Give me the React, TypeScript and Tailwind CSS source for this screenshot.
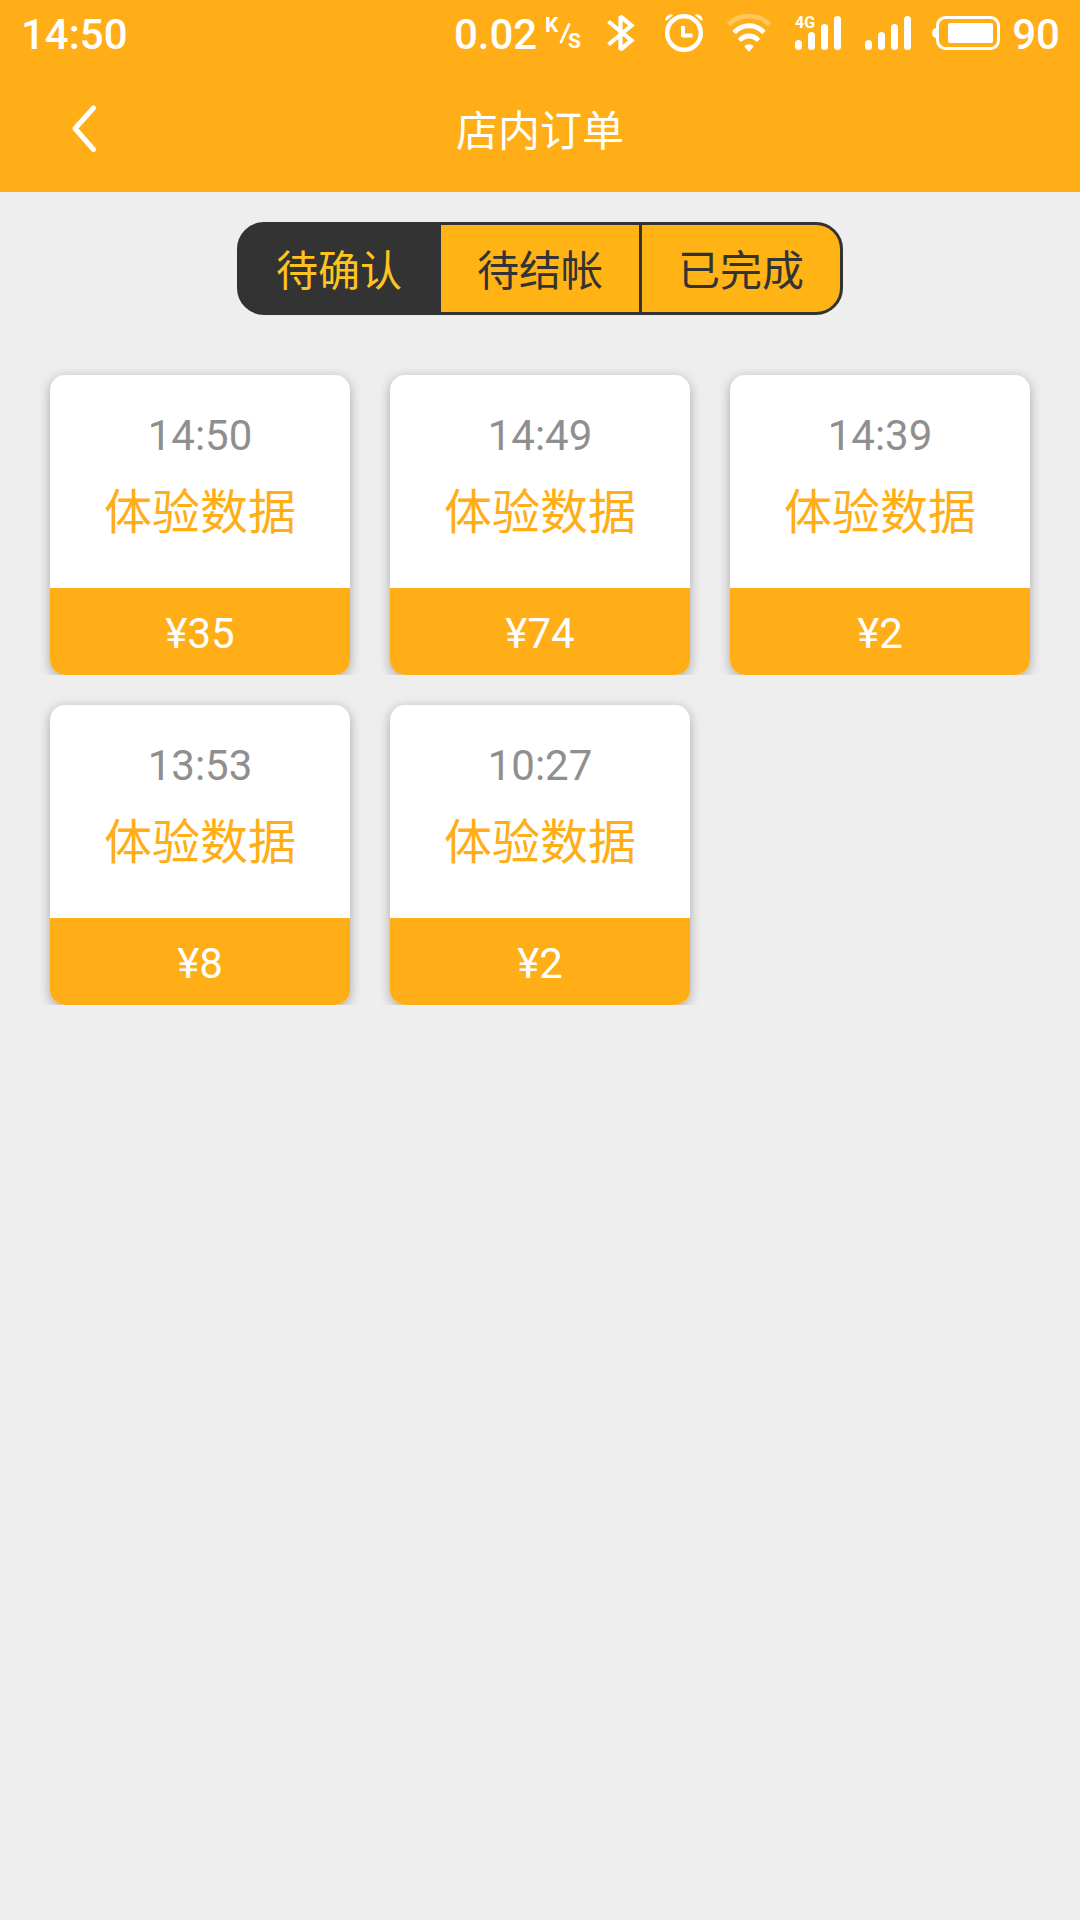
import React, { useState } from 'react';

interface Order {
  id: number;
  time: string;
  name: string;
  price: number;
}

const tabs = ['待确认', '待结帐', '已完成'];

const orders: Order[] = [
  { id: 1, time: '14:50', name: '体验数据', price: 35 },
  { id: 2, time: '14:49', name: '体验数据', price: 74 },
  { id: 3, time: '14:39', name: '体验数据', price: 2 },
  { id: 4, time: '13:53', name: '体验数据', price: 8 },
  { id: 5, time: '10:27', name: '体验数据', price: 2 },
];

const SpeedUnit = () => (
  <svg width="38" height="38" viewBox="0 0 38 38" fill="currentColor" className="font-bold">
    <text x="0" y="18" fontSize="21">K</text>
    <path d="M24 10.500 16 28" stroke="currentColor" strokeWidth="2.8" strokeLinecap="round" />
    <text x="23" y="34" fontSize="21">S</text>
  </svg>
);

const BluetoothIcon = () => (
  <svg width="28" height="38" viewBox="0 0 28 38" fill="none" stroke="currentColor" strokeWidth="4.2" strokeMiterlimit="2">
    <path d="M1.500 7.500 24.500 26.500 13.500 35.500V2.500L24.500 11.500 1.500 30.500" />
  </svg>
);

const AlarmIcon = () => (
  <svg width="38" height="38" viewBox="0 0 38 38" fill="none" stroke="currentColor">
    <circle cx="19" cy="19" r="16.800" strokeWidth="4.4" />
    <path d="M18 12v9.500h9.500" strokeWidth="4" strokeLinejoin="round" />
    <path d="M0 5.500C1 2.500 3 .6 6.500 0L8 1.200 1.600 6.800zM38 5.500C37 2.500 35 .6 31.500 0L30 1.200l6.400 5.600z" fill="currentColor" stroke="none" />
  </svg>
);

const WifiIcon = () => (
  <svg width="44" height="38" viewBox="0 0 44 38" fill="none" stroke="currentColor" strokeWidth="4.8">
    <path d="M1.500 10.500C13 -.7 31 -.7 42.500 10.500" opacity="0.3" />
    <path d="M7 18.500c8.500-9 21.500-9 30 0" />
    <path d="M12.500 26.500c5.300-6 13.700-6 19 0" />
    <path d="M22 38l-4.600-5.500c2-3 7.200-3 9.200 0z" fill="currentColor" stroke="none" />
  </svg>
);

const SignalIcon = ({ label }: { label?: string }) => (
  <svg width="46" height="38" viewBox="0 0 46 38" fill="currentColor">
    {label && <text x="0" y="14" fontSize="16" className="font-bold">{label}</text>}
    <rect x="0" y="26" width="7" height="10" rx="3.500" />
    <rect x="13" y="18" width="7" height="18" rx="3.500" />
    <rect x="26" y="10" width="7" height="26" rx="3.500" />
    <rect x="39" y="2" width="7" height="34" rx="3.500" />
  </svg>
);

const BatteryIcon = () => (
  <svg width="68" height="38" viewBox="0 0 68 38" fill="currentColor">
    <rect x="5.500" y="3.500" width="61" height="31" rx="8" fill="none" stroke="currentColor" strokeWidth="3" />
    <path d="M5 13.500C2 14 0 16 0 19s2 5 5 5.500z" />
    <rect x="16" y="9" width="45" height="20" rx="2" />
  </svg>
);

const StatusBar = () => (
  <div className="flex h-16 items-center justify-between pl-[21px] pr-5 pt-0.5 text-[42px] font-medium leading-none">
    <span className="pt-1">14:50</span>
    <div className="flex items-center gap-6">
      <div className="flex items-center gap-2">
        <span className="pt-1">0.02</span>
        <SpeedUnit />
      </div>
      <div className="flex items-center gap-[30px]">
        <BluetoothIcon />
        <AlarmIcon />
      </div>
      <WifiIcon />
      <SignalIcon label="4G" />
      <div className="flex items-center gap-[21px]">
        <SignalIcon />
        <div className="flex items-center gap-3">
          <BatteryIcon />
          <span className="pt-1">90</span>
        </div>
      </div>
    </div>
  </div>
);

const OrderCard = ({ order }: { order: Order }) => (
  <li className="overflow-hidden px-5 pt-[30px]">
    <a href={`#order-${order.id}`} className="flex aspect-square flex-col rounded-[15px] bg-white text-center shadow-[0_3px_12px_rgba(0,0,0,0.3)]">
      <div className="flex-1 pt-9">
        <p className="text-[42px] leading-[50px] text-[#8f8f8f]">{order.time}</p>
        <p className="mt-4 text-[48px] leading-[72px] text-[#ffae18]">{order.name}</p>
      </div>
      <p className="h-[87px] rounded-b-[15px] bg-[#ffae18] text-[42px] leading-[92px] text-white">¥{order.price}</p>
    </a>
  </li>
);

const App: React.FC = () => {
  const [activeTab, setActiveTab] = useState(0);

  return (
    <div className="min-h-screen bg-[#eeeeee] font-['Roboto','Noto_Sans_CJK_SC',sans-serif]">
      <header className="bg-[#ffae18] text-white">
        <StatusBar />
        <div className="grid h-32 grid-cols-[1fr_auto_1fr] items-center">
          <button type="button" aria-label="返回" className="ml-[60px] flex size-12 items-center justify-center">
            <svg width="48" height="48" viewBox="0 0 48 48" fill="none" stroke="currentColor" strokeWidth="5" strokeLinecap="round" strokeLinejoin="round">
              <path d="M33.500 4 15 24.500l18.500 21" />
            </svg>
          </button>
          <h1 className="pt-2 text-[42px] leading-[60px]">店内订单</h1>
        </div>
      </header>

      <main>
        <div className="flex justify-center pt-[30px]">
          <div className="flex h-[93px] w-[606px] gap-[3px] overflow-hidden rounded-[27px] border-3 border-[#333333] bg-[#333333]">
            {tabs.map((tab, i) => (
              <button
                key={tab}
                type="button"
                aria-pressed={activeTab === i}
                onClick={() => setActiveTab(i)}
                className={`flex-1 pt-1.5 text-[42px] leading-[60px] ${activeTab === i ? 'bg-[#333333] text-[#ffc31f]' : 'bg-[#ffb314] text-[#333333]'}`}
              >
                {tab}
              </button>
            ))}
          </div>
        </div>

        <ul className="grid grid-cols-3 px-[30px] pt-[30px]">
          {orders.map(order => (
            <OrderCard key={order.id} order={order} />
          ))}
        </ul>
      </main>
    </div>
  );
};

export default App;
